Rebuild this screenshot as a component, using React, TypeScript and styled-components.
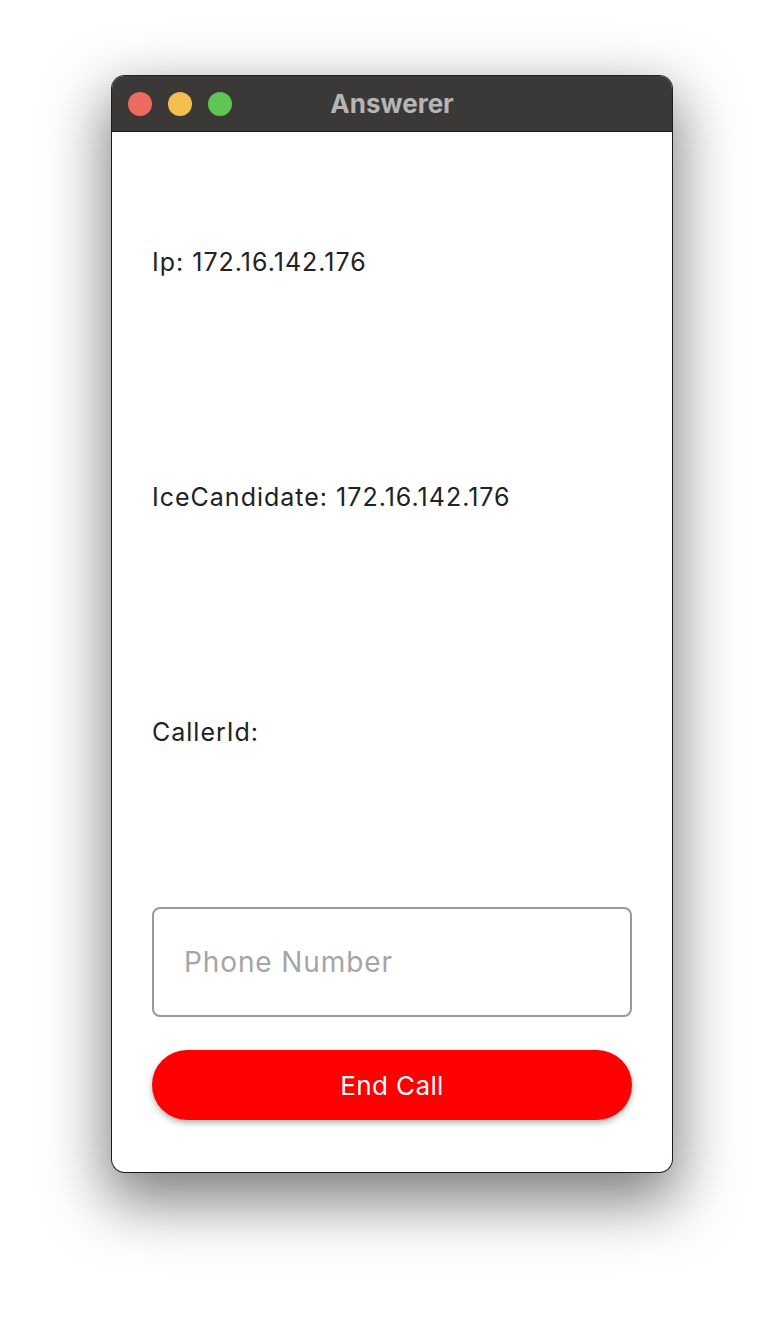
import React from "react";
import styled, { createGlobalStyle } from "styled-components";

const GlobalStyle = createGlobalStyle`
  html, body {
    margin: 0;
    padding: 0;
    background: #ffffff;
  }
  body {
    font-family: Inter, "Noto Sans", sans-serif;
  }
`;

const Page = styled.div`
  width: 784px;
  height: 1320px;
  padding: 76px 112px 0;
  box-sizing: border-box;
  background: #ffffff;
`;

const Window = styled.div`
  width: 560px;
  height: 1096px;
  display: flex;
  flex-direction: column;
  border-radius: 13px;
  overflow: hidden;
  background: #ffffff;
  box-shadow: 0 0 0 1px rgba(0, 0, 0, 0.85), 0 24px 60px 6px rgba(0, 0, 0, 0.5);
`;

const TitleBar = styled.div`
  height: 56px;
  flex-shrink: 0;
  display: flex;
  align-items: center;
  padding: 0 16px;
  background: #3a3937;
  border-bottom: 1px solid #1c1c1c;
  box-sizing: border-box;
`;

const Lights = styled.div`
  display: flex;
  gap: 16px;
`;

const Light = styled.span<{ color: string }>`
  width: 24px;
  height: 24px;
  border-radius: 50%;
  background: ${(p) => p.color};
`;

const Title = styled.div`
  flex: 1;
  text-align: center;
  margin-right: 104px;
  color: #b5b5b5;
  font-family: Inter, "Liberation Sans", sans-serif;
  font-weight: 700;
  font-size: 26px;
`;

const Content = styled.div`
  flex: 1;
  display: flex;
  flex-direction: column;
  padding: 12px 40px 0;
`;

const InfoRow = styled.div`
  height: 235px;
  display: flex;
  align-items: center;
  color: #222222;
  font-size: 25px;
  letter-spacing: 1px;
`;

const PhoneInput = styled.input`
  margin-top: 58px;
  height: 110px;
  box-sizing: border-box;
  border: 2px solid #9a9a9a;
  border-radius: 8px;
  padding: 0 30px;
  font-family: Inter, "Noto Sans", sans-serif;
  font-size: 28px;
  letter-spacing: 0.9px;
  color: #222;
  outline: none;
  &::placeholder {
    color: #a5a5a5;
  }
`;

const CallButton = styled.button`
  margin-top: 33px;
  height: 70px;
  border: none;
  border-radius: 35px;
  background: #ff0000;
  color: #ffffff;
  font-family: Inter, "Noto Sans", sans-serif;
  font-size: 26px;
  letter-spacing: 0.4px;
  box-shadow: 0 3px 6px rgba(0, 0, 0, 0.3);
  cursor: pointer;
`;

export default function App() {
  return (
    <Page>
      <GlobalStyle />
      <Window>
        <TitleBar>
          <Lights>
            <Light color="#ed6a5e" />
            <Light color="#f5bf4f" />
            <Light color="#61c554" />
          </Lights>
          <Title>Answerer</Title>
        </TitleBar>
        <Content>
          <InfoRow>Ip: 172.16.142.176</InfoRow>
          <InfoRow>IceCandidate: 172.16.142.176</InfoRow>
          <InfoRow>CallerId:</InfoRow>
          <PhoneInput placeholder="Phone Number" />
          <CallButton>End Call</CallButton>
        </Content>
      </Window>
    </Page>
  );
}
